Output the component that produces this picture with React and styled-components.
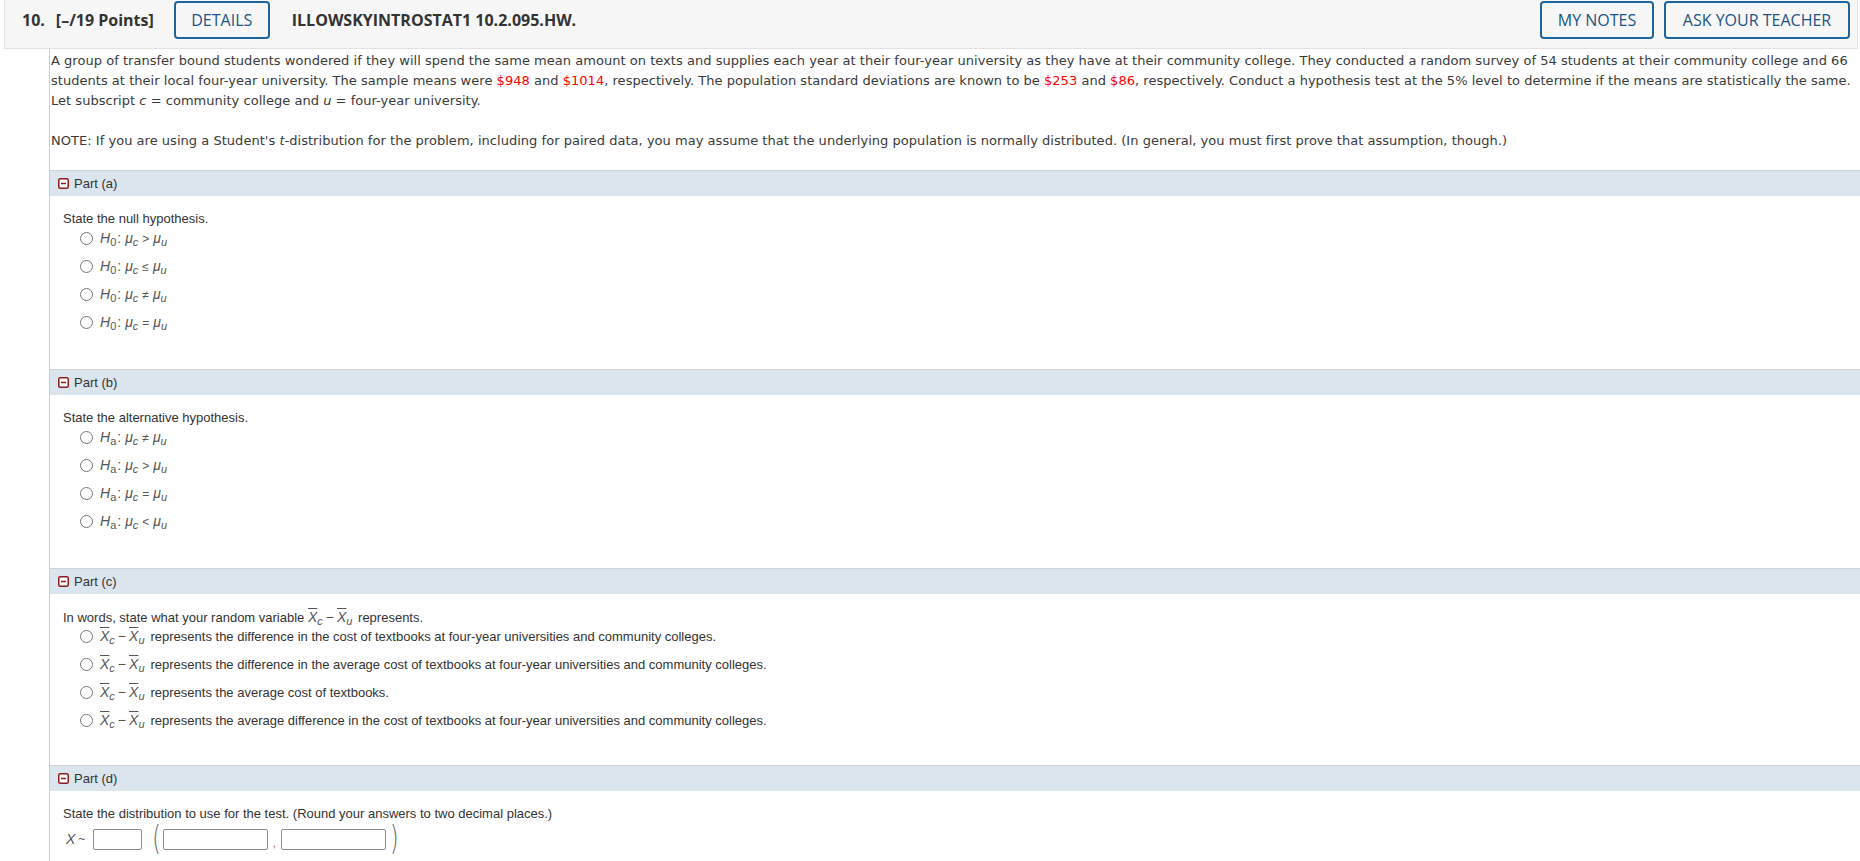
import React from 'react'
import styled, { createGlobalStyle } from 'styled-components'

const GlobalStyle = createGlobalStyle`
  body {
    margin: 0;
    background: #fff;
    font-family: "Liberation Sans", Arial, sans-serif;
    color: #333;
  }
`

const partA = ['>', '≤', '≠', '=']
const partB = ['≠', '>', '=', '<']

const partC = [
  'represents the difference in the cost of textbooks at four-year universities and community colleges.',
  'represents the difference in the average cost of textbooks at four-year universities and community colleges.',
  'represents the average cost of textbooks.',
  'represents the average difference in the cost of textbooks at four-year universities and community colleges.',
]

function MinusIcon() {
  return (
    <IconBox>
      <svg width="11" height="11" viewBox="0 0 11 11">
        <rect x="0.75" y="0.75" width="9.5" height="9.5" rx="1.5" fill="#fff" stroke="#8e1b1b" strokeWidth="1.5" />
        <line x1="3" y1="5.5" x2="8" y2="5.5" stroke="#8e1b1b" strokeWidth="1.5" />
      </svg>
    </IconBox>
  )
}

function Hypothesis({ sub, rel }) {
  return (
    <Hyp>
      <Ital>H</Ital>
      <Sub>{sub}</Sub>
      <Colon>:</Colon>
      <Ital>μ</Ital>
      <Sub $italic>c</Sub>
      <Rel>{rel}</Rel>
      <Ital>μ</Ital>
      <Sub $italic>u</Sub>
    </Hyp>
  )
}

function XDiff({ inline }) {
  return (
    <Diff $inline={inline}>
      <XBar>X</XBar>
      <Sub $italic>c</Sub>
      <Minus>−</Minus>
      <XBar>X</XBar>
      <Sub $italic>u</Sub>
    </Diff>
  )
}

function Part({ label, pb, children }) {
  return (
    <>
      <PartBar>
        <MinusIcon />
        <PartLabel>Part ({label})</PartLabel>
      </PartBar>
      <PartBody $pb={pb}>{children}</PartBody>
    </>
  )
}

export default function App() {
  return (
    <Page>
      <GlobalStyle />
      <Header>
        <Num>10.</Num>
        <Points>[–/19 Points]</Points>
        <HeadButton $w={96} $ml={20}>DETAILS</HeadButton>
        <Code>ILLOWSKYINTROSTAT1 10.2.095.HW.</Code>
        <Spacer />
        <HeadButton $w={114}>MY NOTES</HeadButton>
        <HeadButton $w={186} $ml={10}>ASK YOUR TEACHER</HeadButton>
      </Header>

      <Content>
        <Problem>
          A group of transfer bound students wondered if they will spend the same mean amount on texts and supplies each year at their four-year university as they have at their community college. They conducted a random survey of 54 students at their community college and 66
          <br />
          students at their local four-year university. The sample means were <Red>$948</Red> and <Red>$1014</Red>, respectively. The population standard deviations are known to be <Red>$253</Red> and <Red>$86</Red>, respectively. Conduct a hypothesis test at the 5% level to determine if the means are statistically the same.
          <br />
          Let subscript <i>c</i> = community college and <i>u</i> = four-year university.
          <br />
          <br />
          NOTE: If you are using a Student's <i>t</i>-distribution for the problem, including for paired data, you may assume that the underlying population is normally distributed. (In general, you must first prove that assumption, though.)
        </Problem>

        <Part label="a">
          <Question>State the null hypothesis.</Question>
          <Options>
            {partA.map((rel, i) => (
              <Option key={i}>
                <Radio name="pa" />
                <Hypothesis sub="0" rel={rel} />
              </Option>
            ))}
          </Options>
        </Part>

        <Part label="b">
          <Question>State the alternative hypothesis.</Question>
          <Options>
            {partB.map((rel, i) => (
              <Option key={i}>
                <Radio name="pb" />
                <Hypothesis sub="a" rel={rel} />
              </Option>
            ))}
          </Options>
        </Part>

        <Part label="c" pb={34}>
          <Question>
            In words, state what your random variable <XDiff inline /> represents.
          </Question>
          <Options>
            {partC.map((t, i) => (
              <Option key={i}>
                <Radio name="pc" />
                <XDiff />
                <span>{t}</span>
              </Option>
            ))}
          </Options>
        </Part>

        <Part label="d">
          <Question>State the distribution to use for the test. (Round your answers to two decimal places.)</Question>
          <DistRow>
            <Ital>X</Ital>
            <Tilde>~</Tilde>
            <Box $w={49} />
            <Paren $ml={10}>(</Paren>
            <Box $w={105} />
            <Comma>,</Comma>
            <Box $w={105} />
            <Paren $ml={4}>)</Paren>
          </DistRow>
        </Part>
      </Content>
    </Page>
  )
}

const Page = styled.div`
  width: 100%;
  min-height: 861px;
`

const Header = styled.div`
  display: flex;
  align-items: center;
  box-sizing: border-box;
  height: 49px;
  margin: 0 2px 0 4px;
  padding: 1px 7px 9px 17px;
  background: #f7f7f7;
  border: 1px solid #e2e2e2;
  border-top: none;
  font-family: "Open Sans", "Liberation Sans", sans-serif;
  font-size: 16px;
  color: #333;
`

const Num = styled.span`
  font-weight: 700;
`

const Points = styled.span`
  font-weight: 700;
  margin-left: 11px;
`

const HeadButton = styled.div`
  display: flex;
  align-items: center;
  justify-content: center;
  box-sizing: border-box;
  width: ${p => p.$w}px;
  height: 38px;
  margin-left: ${p => p.$ml || 0}px;
  border: 2px solid #1f659b;
  border-radius: 4px;
  color: #1c5584;
  font-weight: 500;
`

const Code = styled.span`
  font-weight: 700;
  margin-left: 22px;
`

const Spacer = styled.div`
  flex: 1;
`

const Content = styled.div`
  margin-left: 49px;
  border-left: 1px solid #cfcfcf;
`

const Problem = styled.div`
  padding: 2px 0 19px 1px;
  font-family: "DejaVu Sans", Verdana, sans-serif;
  font-size: 13px;
  line-height: 20px;
  letter-spacing: 0.03px;
  white-space: nowrap;
  color: #3a3a3a;
`

const Red = styled.span`
  color: #f00;
`

const PartBar = styled.div`
  display: flex;
  align-items: center;
  height: 25px;
  padding-left: 8px;
  background: #dbe5ee;
  border-top: 1px solid #cdd3d8;
`

const IconBox = styled.span`
  display: flex;
  width: 11px;
  height: 11px;
`

const PartLabel = styled.span`
  margin-left: 5px;
  font-size: 13px;
  color: #333;
`

const PartBody = styled.div`
  padding: 15px 0 ${p => p.$pb ?? 36}px 13px;
`

const Question = styled.div`
  height: 16px;
  line-height: 16px;
  font-size: 13px;
  color: #333;
  white-space: nowrap;
`

const Options = styled.div`
  display: flex;
  flex-direction: column;
  gap: 6px;
  padding-left: 17px;
`

const Option = styled.label`
  display: flex;
  align-items: center;
  height: 22px;
  font-size: 13px;
  color: #333;
  white-space: nowrap;
`

const Radio = styled.input.attrs({ type: 'radio' })`
  width: 13px;
  height: 13px;
  margin: 0 7px 0 0;
  flex: none;
`

const Hyp = styled.span`
  display: inline-flex;
  align-items: baseline;
  font-size: 14px;
  color: #555;
`

const Ital = styled.i`
  font-size: 14px;
  color: #555;
`

const Sub = styled.span`
  font-size: 11px;
  font-style: ${p => (p.$italic ? 'italic' : 'normal')};
  position: relative;
  top: 3px;
`

const Colon = styled.span`
  margin: 0 4px 0 1px;
`

const Rel = styled.span`
  font-size: 12px;
  margin: 0 4px 0 4px;
`

const Diff = styled.span`
  display: inline-flex;
  align-items: baseline;
  margin: 0 ${p => (p.$inline ? 2 : 6)}px 0 0;
  color: #555;
  font-size: 14px;
  line-height: 16px;
  vertical-align: baseline;
`

const XBar = styled.i`
  text-decoration: overline;
  text-decoration-thickness: 1px;
`

const Minus = styled.span`
  margin: 0 3px 0 3px;
`

const DistRow = styled.div`
  display: flex;
  align-items: center;
  height: 20px;
  margin: 7px 0 0 3px;
`

const Tilde = styled.span`
  font-size: 12px;
  color: #555;
  margin: 0 8px 0 3px;
`

const Box = styled.input.attrs({ type: 'text' })`
  box-sizing: border-box;
  width: ${p => p.$w}px;
  height: 21px;
  margin: 0;
  padding: 0 3px;
  border: 1px solid #8c8c8c;
  border-radius: 2px;
  background: #fff;
`

const Paren = styled.span`
  display: inline-block;
  margin: 0 2px 0 ${p => p.$ml}px;
  font-family: "DejaVu Sans", sans-serif;
  font-weight: 200;
  font-size: 22px;
  line-height: 20px;
  color: #666;
  transform: scale(1, 1.5);
`

const Comma = styled.span`
  width: 13px;
  text-align: center;
  font-size: 12px;
  line-height: 12px;
  color: #a77;
  align-self: flex-end;
`
